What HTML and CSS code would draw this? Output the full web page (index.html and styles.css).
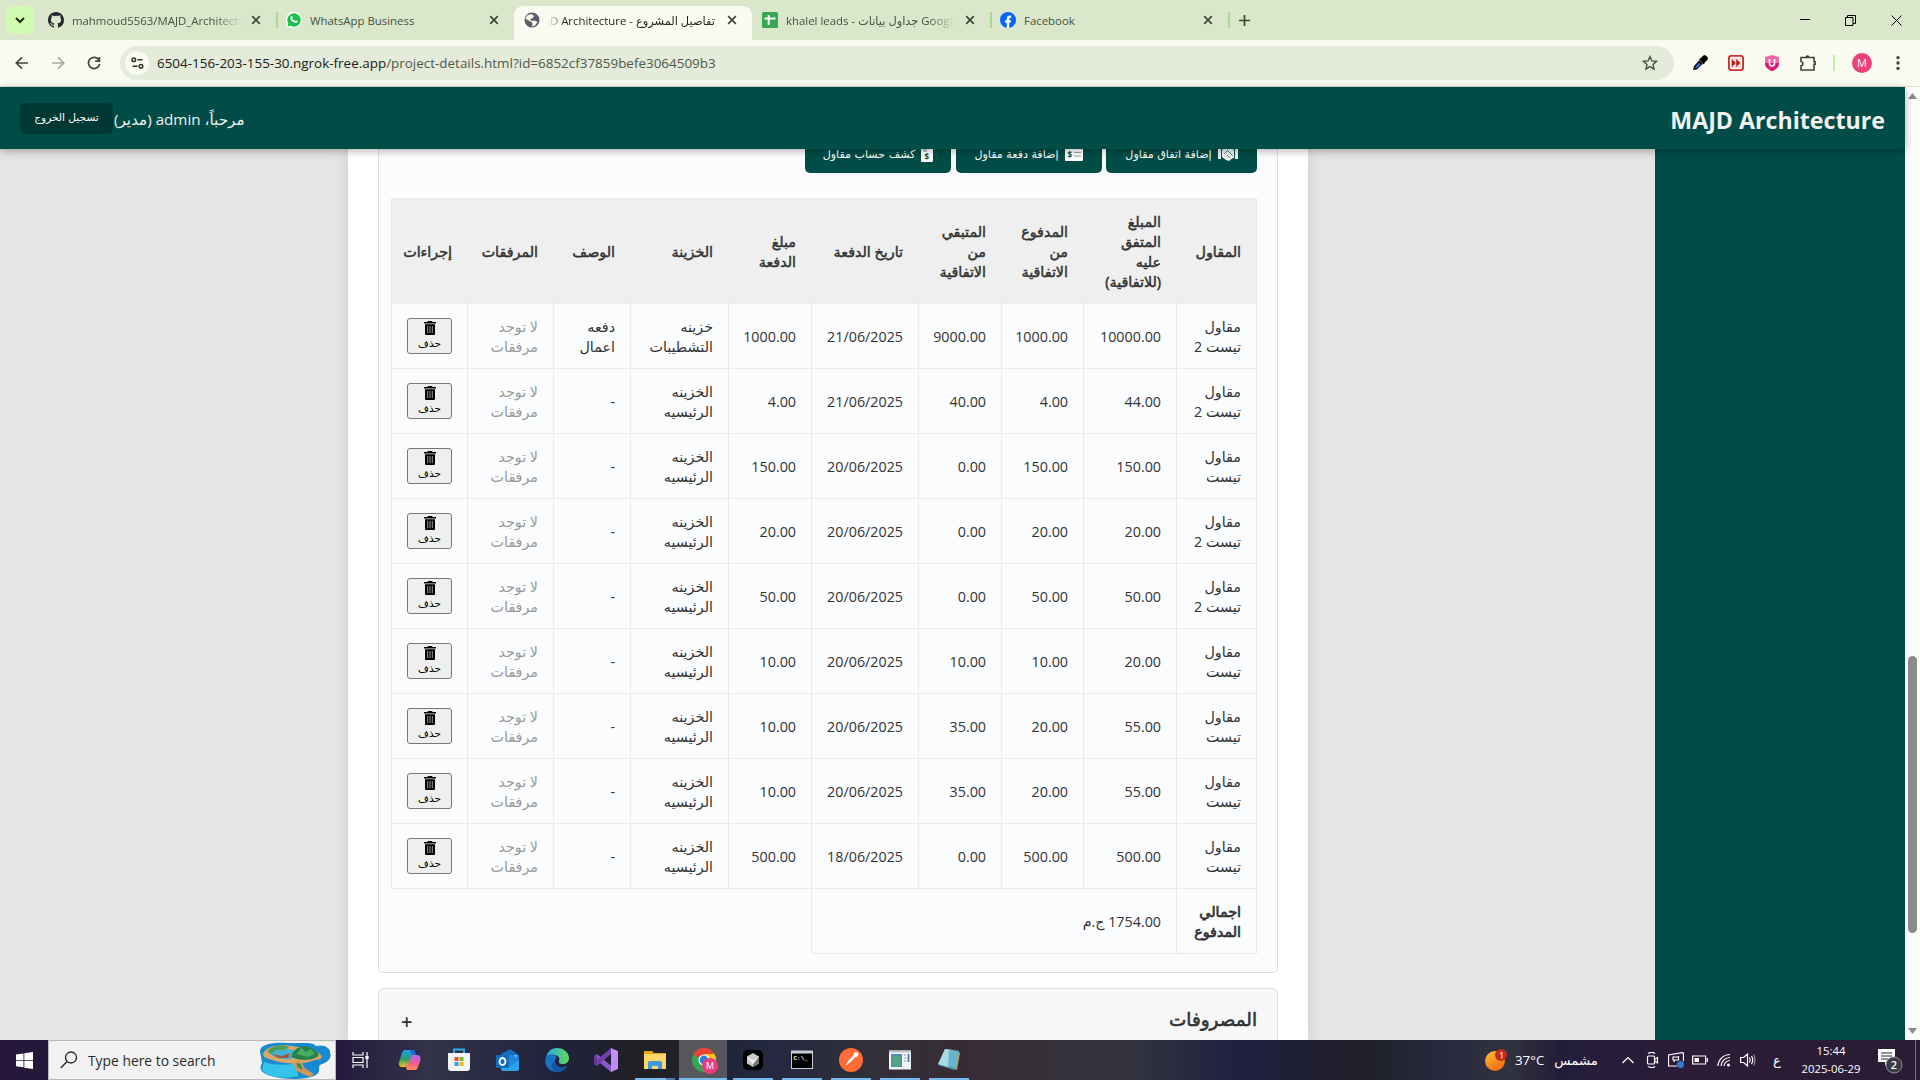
FILE: index.html
```html
<!DOCTYPE html>
<html lang="ar">
<head>
<meta charset="utf-8">
<title>تفاصيل المشروع - MAJD Architecture</title>
<link rel="stylesheet" href="styles.css">
</head>
<body>
<svg width="0" height="0" class="defs">
  <symbol id="x" viewBox="0 0 10 10"><path d="M1.2 1.2l7.6 7.6M8.8 1.2L1.2 8.8" stroke="currentColor" stroke-width="1.7" fill="none"/></symbol>
  <symbol id="trash" viewBox="0 0 12 14"><path d="M4 0h4l.6 1H12v1.500H0V1h3.400zM1 3.300h10V13a1 1 0 0 1-1 1H2a1 1 0 0 1-1-1z" fill="#000"/><path d="M3.700 5v7M6 5v7M8.300 5v7" stroke="#b9bdd0" stroke-width=".8"/></symbol>
</svg>

<div class="tabs">
  <div class="tabsearch"><svg width="10" height="8" viewBox="0 0 10 8"><path d="M1 2l4 4 4-4" fill="none" stroke="#1c2b12" stroke-width="2"/></svg></div>
  <div class="tab">
    <svg class="fav" viewBox="0 0 16 16"><path fill="#24292f" d="M8 0C3.580 0 0 3.580 0 8c0 3.540 2.290 6.530 5.470 7.590.4.070.55-.17.55-.38 0-.19-.01-.82-.01-1.490-2.010.37-2.530-.49-2.690-.94-.09-.23-.48-.94-.82-1.130-.28-.15-.68-.52-.01-.53.63-.01 1.080.58 1.230.82.72 1.210 1.870.87 2.330.66.070-.52.28-.87.51-1.070-1.780-.2-3.640-.89-3.640-3.950 0-.87.31-1.590.82-2.150-.08-.2-.36-1.020.08-2.120 0 0 .67-.21 2.200.82A7.600 7.600 0 0 1 8 3.870c.68 0 1.360.09 2 .26 1.530-1.040 2.200-.82 2.200-.82.44 1.100.16 1.920.08 2.120.51.56.82 1.270.82 2.150 0 3.070-1.870 3.750-3.650 3.950.29.25.54.73.54 1.480 0 1.070-.01 1.930-.01 2.200 0 .21.15.46.55.38A8 8 0 0 0 16 8c0-4.420-3.580-8-8-8z"/></svg>
    <span class="ttl fade">mahmoud5563/MAJD_Architecture</span><svg class="cl"><use href="#x"/></svg>
  </div>
  <div class="tab line">
    <svg class="fav" viewBox="0 0 16 16"><path d="M0 16l1-4.200A8 8 0 1 1 4.500 15z" fill="#fff"/><path d="M1.400 14.600l.9-3.100A6.700 6.700 0 1 1 4.700 13.800z" fill="#18c14b"/><path d="M5.300 4.200c.7-.5 1 0 1.400 1.300.1.500-.5.800-.5 1.100.7 1.300 1.600 2 2.800 2.500.4 0 .7-.9 1.100-.8 1.500.6 1.700.8 1.400 1.600-.8 1.500-2.600 1.200-4.300.2C5.300 8.900 4.300 7.600 4.400 6c0-.8.400-1.400.9-1.800z" fill="#fff"/></svg>
    <span class="ttl">WhatsApp Business</span><svg class="cl"><use href="#x"/></svg>
  </div>
  <div class="tab active">
    <svg class="fav" viewBox="0 0 16 16"><circle cx="8" cy="8" r="7.500" fill="#5a5e68"/><path d="M3 3.500L7.500 2l2.500 2-1.500 2.500L6 7l1.500 2 3-.5 3 1.500-2.500 3.500-3 1 .5-3.500L4 8 1.500 7z" fill="#f9faf0"/></svg>
    <span class="ttl fadel" dir="rtl">تفاصيل المشروع - MAJD Architecture</span><svg class="cl"><use href="#x"/></svg>
  </div>
  <div class="tab">
    <svg class="fav" viewBox="0 0 16 16"><rect width="16" height="16" rx="1.500" fill="#34a853"/><path d="M6.700 3v10M2.500 6.500h11" stroke="#fff" stroke-width="2"/></svg>
    <span class="ttl fade">khalel leads - جداول بيانات Google</span><svg class="cl"><use href="#x"/></svg>
  </div>
  <div class="tab line">
    <svg class="fav" viewBox="0 0 16 16"><circle cx="8" cy="8" r="8" fill="#0866ff"/><path d="M6.800 16v-5.300H5V8.200h1.800V7c0-2.500 1.200-3.500 3.100-3.500.5 0 1 .1 1.300.2v2.200h-.9c-.9 0-1.100.5-1.100 1.200v1.100H11l-.4 2.500H9.200V16z" fill="#fff"/></svg>
    <span class="ttl">Facebook</span><svg class="cl"><use href="#x"/></svg>
  </div>
  <div class="plus"><svg width="11" height="11" viewBox="0 0 11 11"><path d="M5.500 0v11M0 5.500h11" stroke="#3a4a2e" stroke-width="1.700"/></svg></div>
  <div class="win">
    <svg width="10" height="10"><path d="M0 4.500h10" stroke="#000"/></svg>
    <svg width="11" height="11"><path d="M.5 2.500h7.500v8H.5zM2.500 2.500v-2h8v8H8" fill="none" stroke="#000"/></svg>
    <svg width="11" height="11"><path d="M.5.5l10 10M10.500.5l-10 10" stroke="#000"/></svg>
  </div>
</div>

<div class="toolbar">
  <div class="nav">
    <svg width="14" height="14" viewBox="0 0 14 14"><path d="M13 7H1.500M7 1.300L1.300 7 7 12.700" fill="none" stroke="#3d4a35" stroke-width="1.700"/></svg>
    <svg width="14" height="14" viewBox="0 0 14 14"><path d="M1 7h11.500M7 1.300L12.700 7 7 12.700" fill="none" stroke="#a6ab9d" stroke-width="1.700"/></svg>
    <svg width="14" height="14" viewBox="0 0 14 14"><path d="M12 4.200A5.600 5.600 0 1 0 12.600 8M12.400 1v4.200H8.200" fill="none" stroke="#3d4a35" stroke-width="1.700"/></svg>
  </div>
  <div class="url">
    <div class="site"><svg width="13" height="12" viewBox="0 0 13 12"><g fill="none" stroke="#2d3926" stroke-width="1.500"><circle cx="2.800" cy="2.800" r="1.800"/><path d="M6.500 2.800h5M1.500 9.200h5"/><circle cx="10" cy="9.200" r="1.800"/></g></svg></div>
    <span class="addr"><b>6504-156-203-155-30.ngrok-free.app</b>/project-details.html?id=6852cf37859befe3064509b3</span>
    <svg width="16" height="16" viewBox="0 0 16 16"><path d="M8 1.500l1.900 4.400 4.700.4-3.600 3.100 1.100 4.700L8 11.600l-4.100 2.500L5 9.400 1.400 6.300l4.700-.4z" fill="none" stroke="#444b3e" stroke-width="1.300"/></svg>
  </div>
  <div class="exts">
    <svg viewBox="0 0 16 16"><path d="M1 15l1-4 5.500-6 3.500 3.500L5 14.500z" fill="#10131c"/><path d="M3 12.500l4-4.500 1.500 1.500L5 13z" fill="#4b72e6"/><path d="M7 4l2-1 2-2.300L13 0l3 2.500-.5 2.500L13 7l-1 2.500z" fill="#000"/></svg>
    <svg viewBox="0 0 16 16"><rect x=".9" y=".9" width="14.200" height="14.200" rx="2.500" fill="#fff" stroke="#c7312d" stroke-width="1.900"/><rect x="2.800" y="2.800" width="10.400" height="10.400" fill="#f6dcda"/><path d="M3.800 4l4 4-4 4zM8.200 4l4.200 4-4.200 4z" fill="#b5201c"/></svg>
    <svg viewBox="0 0 16 16"><path d="M8 0l7 2v6c0 4-3 6.500-7 8-4-1.500-7-4-7-8V2z" fill="#ee6aa5"/><path d="M1 8h14c0 4-3 6.500-7 8-4-1.500-7-4-7-8z" fill="#d91d72"/><path d="M5.500 4v4.500a2.500 2.500 0 0 0 5 0V4" fill="none" stroke="#fff" stroke-width="1.700"/></svg>
    <svg viewBox="0 0 16 16"><path d="M1 2.500h13v4.200h1.300v2.600H14V15H1v-4c2.600-.5 2.600-4 0-4.500z" fill="none" stroke="#3d4a35" stroke-width="1.600"/><path d="M5.500 2a2 1.800 0 0 1 4 0z" fill="#3d4a35"/></svg>
    <i></i>
    <span class="me">M</span>
    <svg viewBox="0 0 16 16" fill="#3d4a35"><circle cx="8" cy="2.600" r="1.700"/><circle cx="8" cy="8" r="1.700"/><circle cx="8" cy="13.400" r="1.700"/></svg>
  </div>
</div>

<div class="view">
<div class="page" dir="rtl">
  <header>
    <h1 dir="ltr">MAJD Architecture</h1>
    <div class="user"><span>مرحباً، admin (مدير)</span><button class="logout">تسجيل الخروج</button></div>
  </header>
  <div class="body">
    <aside></aside>
    <main>
      <section class="sec">
        <div class="btns">
          <button class="b1"><svg width="20" height="14" viewBox="0 0 20 14"><path d="M0 2h3v10H0zM17 2h3v10h-3zM4 2.500l3-1 3 .8 3-.8 3 1V11l-2 .6-3 2.400-3-1-4-3z" fill="#eef4f3"/><path d="M6 7l3.500-3.500 5 5M9 8l3 3" stroke="#4d827e" fill="none"/></svg><span>إضافة اتفاق مقاول</span></button>
          <button class="b2"><svg width="18" height="13" viewBox="0 0 18 13"><rect width="18" height="13" rx="1" fill="#fff"/><path d="M9 4.500h7M9 8h7" stroke="#8fb0ad"/><text x="2.500" y="10" class="dol">$</text></svg><span>إضافة دفعة مقاول</span></button>
          <button class="b3"><svg width="12" height="15" viewBox="0 0 12 15"><path d="M1 0h10a1 1 0 0 1 1 1v13a1 1 0 0 1-1 1H1a1 1 0 0 1-1-1V1a1 1 0 0 1 1-1z" fill="#fff"/><path d="M2 2h4M2 4h4" stroke="#6d9693"/><text x="3.500" y="12.500" class="dol">$</text></svg><span>كشف حساب مقاول</span></button>
        </div>
        <table>
          <colgroup><col class="c1"><col class="c2"><col class="c3"><col class="c4"><col class="c5"><col class="c6"><col class="c7"><col class="c8"><col class="c9"><col class="c10"></colgroup>
          <thead><tr><th>المقاول</th><th>المبلغ<br>المتفق<br>عليه<br>(للاتفاقية)</th><th>المدفوع<br>من<br>الاتفاقية</th><th>المتبقي<br>من<br>الاتفاقية</th><th>تاريخ الدفعة</th><th>مبلغ<br>الدفعة</th><th>الخزينة</th><th>الوصف</th><th>المرفقات</th><th>إجراءات</th></tr></thead>
          <tbody>
          <tr><td>مقاول<br>تيست 2</td><td>10000.00</td><td>1000.00</td><td>9000.00</td><td>21/06/2025</td><td>1000.00</td><td>خزينه<br>التشطيبات</td><td>دفعه<br>اعمال</td><td class="no">لا توجد<br>مرفقات</td><td><button class="del"><svg><use href="#trash"/></svg>حذف</button></td></tr>
          <tr><td>مقاول<br>تيست 2</td><td>44.00</td><td>4.00</td><td>40.00</td><td>21/06/2025</td><td>4.00</td><td>الخزينه<br>الرئيسيه</td><td>-</td><td class="no">لا توجد<br>مرفقات</td><td><button class="del"><svg><use href="#trash"/></svg>حذف</button></td></tr>
          <tr><td>مقاول<br>تيست</td><td>150.00</td><td>150.00</td><td>0.00</td><td>20/06/2025</td><td>150.00</td><td>الخزينه<br>الرئيسيه</td><td>-</td><td class="no">لا توجد<br>مرفقات</td><td><button class="del"><svg><use href="#trash"/></svg>حذف</button></td></tr>
          <tr><td>مقاول<br>تيست 2</td><td>20.00</td><td>20.00</td><td>0.00</td><td>20/06/2025</td><td>20.00</td><td>الخزينه<br>الرئيسيه</td><td>-</td><td class="no">لا توجد<br>مرفقات</td><td><button class="del"><svg><use href="#trash"/></svg>حذف</button></td></tr>
          <tr><td>مقاول<br>تيست 2</td><td>50.00</td><td>50.00</td><td>0.00</td><td>20/06/2025</td><td>50.00</td><td>الخزينه<br>الرئيسيه</td><td>-</td><td class="no">لا توجد<br>مرفقات</td><td><button class="del"><svg><use href="#trash"/></svg>حذف</button></td></tr>
          <tr><td>مقاول<br>تيست</td><td>20.00</td><td>10.00</td><td>10.00</td><td>20/06/2025</td><td>10.00</td><td>الخزينه<br>الرئيسيه</td><td>-</td><td class="no">لا توجد<br>مرفقات</td><td><button class="del"><svg><use href="#trash"/></svg>حذف</button></td></tr>
          <tr><td>مقاول<br>تيست</td><td>55.00</td><td>20.00</td><td>35.00</td><td>20/06/2025</td><td>10.00</td><td>الخزينه<br>الرئيسيه</td><td>-</td><td class="no">لا توجد<br>مرفقات</td><td><button class="del"><svg><use href="#trash"/></svg>حذف</button></td></tr>
          <tr><td>مقاول<br>تيست</td><td>55.00</td><td>20.00</td><td>35.00</td><td>20/06/2025</td><td>10.00</td><td>الخزينه<br>الرئيسيه</td><td>-</td><td class="no">لا توجد<br>مرفقات</td><td><button class="del"><svg><use href="#trash"/></svg>حذف</button></td></tr>
          <tr><td>مقاول<br>تيست</td><td>500.00</td><td>500.00</td><td>0.00</td><td>18/06/2025</td><td>500.00</td><td>الخزينه<br>الرئيسيه</td><td>-</td><td class="no">لا توجد<br>مرفقات</td><td><button class="del"><svg><use href="#trash"/></svg>حذف</button></td></tr>
          </tbody>
          <tfoot><tr><td class="sum">اجمالي<br>المدفوع</td><td colspan="4">1754.00 ج.م</td></tr></tfoot>
        </table>
      </section>
      <section class="next"><h2>المصروفات</h2><b>+</b></section>
    </main>
  </div>
</div>
<div class="scroll"><svg width="9" height="6"><path d="M4.500 0L9 6H0z" fill="#8b8b8b"/></svg><i></i><svg width="9" height="6"><path d="M0 0h9L4.500 6z" fill="#8b8b8b"/></svg></div>
</div>

<div class="task">
  <div class="start"><svg width="17" height="17" viewBox="0 0 17 17"><path d="M0 2.400l7.500-1V8H0zM8.300 1.300L17 0v8H8.300zM0 8.800h7.500v6.500l-7.500-1zM8.300 8.800H17V17l-8.700-1.300z" fill="#fff"/></svg></div>
  <div class="search">
    <svg width="18" height="18" viewBox="0 0 18 18"><circle cx="11" cy="6.500" r="5.500" fill="none" stroke="#222" stroke-width="1.300"/><path d="M7 10.500L.8 17" stroke="#222" stroke-width="1.300"/></svg>
    <span>Type here to search</span>
    <svg class="isle" width="71" height="37" viewBox="0 0 70 37" preserveAspectRatio="none"><path d="M0 9C0 2 14 0 27 1l18 0c6 0 9 1 10 3 8-2 15 2 14 7 2 4-1 9-10 12-2 3 2 8-6 11-8 4-30 4-42 0C0 31-1 26 2 21z" fill="#188ad0"/><path d="M4 20c10 4 28 3 30 1l4 13c-12 3-33 2-36-7z" fill="#35c3ea"/><path d="M3 12C5 3 24 2 31 4s18 0 28 8c4 3 1 6-5 6-10 5-30 5-45-1-4-1-6-3-6-5z" fill="#dba765"/><path d="M8 10c6-4 18-4 24-2 5 0 7 5 1 8-9 3-20 0-25-6z" fill="#3fb4d6"/><path d="M7 9c4-4 9-5 14-6l8 2-5 3-8 0-5 4z" fill="#4a9e55"/><path d="M31 15c0-5 5-10 13-11 7 1 12 5 14 9-2 5-18 7-27 2z" fill="#27834a"/><path d="M36 12l5-6 4 4 5-3 4 5-7 3z" fill="#49ad61"/><path d="M12 12l10 2 7-3-1 5-10 0z" fill="#a5553b"/><path d="M33 20l7-1 4 7 9 6-3 3-8-3-7-4-1-4z" fill="#cf975a"/><path d="M36 21l4 1 2 6-5-3z" fill="#348b54"/></svg>
  </div>
  <div class="tv"><svg width="18" height="16" viewBox="0 0 18 16"><path d="M1 0v3h10V0M1 16v-3h10v3M1 5.500h10v5H1zM15 0v16" fill="none" stroke="#fff" stroke-width="1.200"/><rect x="13.400" y="4" width="3.200" height="3" fill="#fff"/></svg></div>
  <div class="apps">
    <div><svg viewBox="0 0 24 24"><defs><linearGradient id="g1" x1="0" y1="0" x2="0" y2="1"><stop offset="0" stop-color="#1d9bf0"/><stop offset=".55" stop-color="#2f9e6e"/><stop offset="1" stop-color="#f5c518"/></linearGradient><linearGradient id="g2" x1="0" y1="0" x2="0" y2="1"><stop offset="0" stop-color="#a56bf0"/><stop offset=".5" stop-color="#f0569b"/><stop offset="1" stop-color="#ff9050"/></linearGradient></defs><path d="M7 2h9l2 5h-4L10 19H3c-3-1-2-5-1-8L4 5c.6-2 1.500-3 3-3z" fill="url(#g1)"/><path d="M12 2h4l2 5-4 0z" fill="#2464cf"/><path d="M17 22H9l-2-5h3L14 7h6c3 1 3 4 2 7l-2 5c-.6 2-1.500 3-3 3z" fill="url(#g2)"/></svg></div>
    <div><svg viewBox="0 0 24 24"><path d="M7 5V1.500h10V5" fill="none" stroke="#30aee8" stroke-width="2"/><path d="M1 5h22v15a3 3 0 0 1-3 3H4a3 3 0 0 1-3-3z" fill="#f2f3f5"/><path d="M7.500 9h4v4h-4z" fill="#e8502e"/><path d="M12.500 9h4v4h-4z" fill="#7cb82f"/><path d="M7.500 14h4v4h-4z" fill="#2ba5e6"/><path d="M12.500 14h4v4h-4z" fill="#fbb713"/></svg></div>
    <div><svg viewBox="0 0 24 24"><path d="M5 6l9-5 9 6v14H5z" fill="#1b6dc0"/><path d="M8 7h13v7H8z" fill="#59c9f5"/><path d="M5 14l9 4 9-6v9a2 2 0 0 1-2 2H7a2 2 0 0 1-2-2z" fill="#2aa5e9"/><path d="M10 7h8l5 5-9 6z" fill="#2189dc"/><rect y="7" width="13" height="13" rx="1" fill="#106cbd"/><ellipse cx="6.500" cy="13.500" rx="3" ry="3.500" fill="none" stroke="#fff" stroke-width="1.800"/></svg></div>
    <div><svg viewBox="0 0 24 24"><defs><linearGradient id="g3"><stop offset="0" stop-color="#26a8e8"/><stop offset="1" stop-color="#63d957"/></linearGradient></defs><path d="M1 10C2 4 6 0 12 0c7 0 12 5 12 10 0 4-3 6-6 6s-5-1-4-3 0-6-5-6c-4 0-7 2-8 5z" fill="url(#g3)"/><path d="M1 9c-3 9 4 15 11 15 4 0 8-2 10-6-5 3-12 1-12-5 0-2 1-3 2-4C8 5 3 6 1 9z" fill="#1672c7"/><path d="M10 13c-1 7 6 8 12 5-3 5-8 6-11 6-5-2-6-9-1-11z" fill="#1853a1"/></svg></div>
    <div><svg viewBox="0 0 24 24"><path d="M0 8l3-2L20 20l-3 4L0 10z" fill="#8a58c9"/><path d="M0 16l3 2L18 5l-1-5L0 14z" fill="#7240a8"/><path d="M0 8l3-2v12l-3-2z" fill="#68379c"/><path d="M17 0l7 3v18l-7 3z" fill="#c48cf5"/></svg></div>
    <div class="run half"><svg viewBox="0 0 24 24"><path d="M1 3h8l2 2h12v5H1z" fill="#e8a317"/><path d="M1 6h22v15H1z" fill="#ffd766"/><path d="M5 21v-6c0-1.500 1-2 2-2h10c1 0 2 .5 2 2v6h-4v-3H9v3z" fill="#3d98dd"/></svg></div>
    <div class="run on"><svg viewBox="0 0 24 24"><circle cx="12" cy="12" r="12" fill="#33a852"/><path d="M12 12L1.600 6A12 12 0 0 1 22.400 6z" fill="#ea4335"/><path d="M12 6h10.400A12 12 0 0 1 12 24l5-9z" fill="#fbc116"/><path d="M1.600 6A12 12 0 0 1 22.400 6H12L7 10z" fill="#ea4335"/><circle cx="12" cy="12" r="5.600" fill="#fff"/><circle cx="12" cy="12" r="4.400" fill="#2c7be5"/></svg><em>M</em></div>
    <div class="run"><svg viewBox="0 0 24 24"><rect x="2" y="2" width="20" height="20" rx="5" fill="#000"/><path d="M12 5l6 3.500v7L12 19l-6-3.500v-7z" fill="#c9c9c9"/><path d="M12 12l6-3.500v7L12 19z" fill="#777"/><path d="M6 8.500L12 12l6-3.500-6 8z" fill="#eee"/></svg></div>
    <div class="run"><svg viewBox="0 0 24 24"><rect x="1" y="2.500" width="22" height="18.500" fill="#c9ccd0"/><rect x="2" y="5.500" width="20" height="14.500" fill="#000"/><text x="3.500" y="12" class="cmd">C:\_</text></svg></div>
    <div class="run"><svg viewBox="0 0 24 24"><circle cx="12" cy="12" r="12" fill="#ff6c37"/><path d="M6.500 17.500l3-5 6-6 1.500 2-6 6z" fill="#fff"/><circle cx="17" cy="6.500" r="2.400" fill="#fff"/></svg></div>
    <div class="run"><svg viewBox="0 0 24 24"><rect x="1" y="2.500" width="22" height="19" fill="#f3f6f8"/><rect x="3" y="6" width="11" height="13" fill="#4a8fb5"/><rect x="4.500" y="8" width="8" height="10" fill="#55a581"/><path d="M16 7h2M16 10h2M16 13h2" stroke="#8a9aa5" stroke-width="1.200"/><path d="M20.500 6v8" stroke="#3f74c9" stroke-width="1.800"/><path d="M1 3.500h22" stroke="#b8c4ce" stroke-width="2"/></svg></div>
    <div class="run"><svg viewBox="0 0 24 24"><path d="M21 3l2 2-3 17-3-1z" fill="#b59a62"/><path d="M8 1l14 2-4 19-17-5z" fill="#4f9fb5"/><path d="M8 1l8 1-4 17-11-3z" fill="#a8dbe6"/><path d="M12 2l10 1-3 17-8-2z" fill="#65b4c8"/></svg></div>
  </div>
  <div class="tray">
    <div class="wx"><svg width="24" height="24" viewBox="0 0 24 24"><defs><linearGradient id="g4" x1="0" y1="0" x2=".6" y2="1"><stop offset="0" stop-color="#fbbf34"/><stop offset="1" stop-color="#f26c13"/></linearGradient></defs><circle cx="11" cy="13" r="10" fill="url(#g4)"/><circle cx="17" cy="7" r="6" fill="#c42b1c"/><text x="15" y="10.500" class="one">1</text></svg><span>37°C</span><span class="sun">مشمس</span></div>
    <div class="icons">
      <svg viewBox="0 0 16 16"><path d="M2.500 11L8 5.500l5.500 5.500"/></svg>
      <svg viewBox="0 0 16 16"><rect x="3.500" y="4" width="7" height="8" rx="1"/><path d="M10.500 7.500l3-2v5.500l-3-2M4 1.500q4-2 7 0M4 14.500q4 2 7 0"/></svg>
      <svg viewBox="0 0 16 16"><path d="M12 1H15.500V9M9 14H.5V3L15 .5M5 8V5h6M10.500 4v4h-5l1 2"/><circle cx="12.500" cy="12.500" r="3.500" fill="#2d7bd0" stroke="none"/></svg>
      <svg viewBox="0 0 16 16"><path d="M.6 4h13v8H.6zM15.300 6v4"/><path d="M2.500 6h4.500v4H2.500z" fill="#fff" stroke="none"/></svg>
      <svg viewBox="0 0 16 16"><path d="M2 14A12 12 0 0 1 14 2.500M5 14a9 9 0 0 1 9-8.500M8 14a6 6 0 0 1 6-5.500"/><circle cx="12.500" cy="13" r="1.500" fill="#fff" stroke="none"/></svg>
      <svg viewBox="0 0 16 16"><path d="M.6 5.500h3L7.500 2v12l-3.900-3.500h-3zM9.500 5.500q1.500 2.500 0 5M11.500 4q2.500 4 0 8"/><path d="M13.500 2.500q3 5.500 0 11" opacity=".5"/></svg>
    </div>
    <span class="lang">ع</span>
    <div class="clock"><span>15:44</span><span>2025-06-29</span></div>
    <div class="note"><svg width="25" height="25" viewBox="0 0 25 25"><path d="M0 0h17v13h-6l-4 4v-4H0z" fill="#fff"/><path d="M3 4h11M3 7h11M3 10h7" stroke="#2b2038"/><circle cx="16" cy="16" r="8" fill="#3b3a46" stroke="#8d8b98"/><text x="12.800" y="20" class="two">2</text></svg></div>
    <i></i>
  </div>
</div>
</body>
</html>
```
FILE: styles.css
```css
*{box-sizing:border-box}
body{margin:0;width:1920px;height:1080px;overflow:hidden;display:flex;flex-direction:column;font-family:"Open Sans","Noto Sans","DejaVu Sans",sans-serif;color:#333}
.defs{position:absolute}
svg{flex:none;display:block}
/* browser tabs */
.tabs{height:40px;background:#dae7cb;display:flex;flex:none;padding:6px 0 0 6px}
.tabsearch{width:28px;height:28px;border-radius:9px;background:#cffcb0;display:flex;align-items:center;justify-content:center;margin-right:4px}
.tab{width:238px;height:34px;padding:0 15px 6px 10px;display:flex;align-items:center;gap:8px;font-size:11.400px;color:#46523d}
.fav{width:16px;height:16px}
.cl{width:10px;height:10px;margin-left:auto;color:#3c4935}
.ttl{width:169px;white-space:nowrap;overflow:hidden}
.fade{-webkit-mask:linear-gradient(90deg,#000 85%,transparent);mask:linear-gradient(90deg,#000 85%,transparent)}
.fadel{width:167px;-webkit-mask:linear-gradient(270deg,#000 90%,transparent);mask:linear-gradient(270deg,#000 90%,transparent)}
.tab.active{background:#f9faf0;border-radius:9px 9px 0 0;color:#1d241a}
.line{background:linear-gradient(#a9d98c,#a9d98c) 0 6px/2px 16px no-repeat}
.plus{width:32px;height:28px;display:flex;align-items:center;justify-content:center;background:linear-gradient(#a9d98c,#a9d98c) 0 6px/2px 16px no-repeat}
.win{margin-left:auto;display:flex;gap:35px;height:28px;align-items:center;padding-right:18px}
.toolbar{height:47px;flex:none;background:#f9faf0;border-bottom:1px solid #dfe1d6;display:flex;align-items:center}
.nav{width:120px;display:flex;gap:22px;padding-left:15px}
.url{width:1554px;height:34px;border-radius:17px;background:#e4ebda;display:flex;align-items:center;padding:0 16px 0 5px}
.site{width:24px;height:24px;border-radius:50%;background:#f9faf0;display:flex;align-items:center;justify-content:center;margin-right:8px}
.addr{flex:1;font-size:13.440px;color:#50584a;white-space:nowrap}
.addr b{font-weight:400;color:#1b2117}
.exts{display:flex;align-items:center;padding-left:18px;gap:20px}
.exts svg{width:16px;height:16px}
.exts i{width:2px;height:16px;background:#c2eba8;margin:0 -3px 0 -3px}
.me{width:20px;height:20px;border-radius:50%;background:#ec407a;color:#fff;font-size:11px;line-height:20px;text-align:center}
.me+svg{margin-left:-2px}
/* application */
.view{height:953px;flex:none;display:flex}
.page{width:1905px;display:flex;flex-direction:column;background:#e5e5e5}
header{height:62px;flex:none;background:#004d47;box-shadow:0 2px 8px rgba(0,0,0,.3);position:relative;z-index:2;display:flex;justify-content:space-between;align-items:center;padding:0 20px;color:#f1f1f1}
h1{margin:4px 0 0;font-size:23.200px;line-height:30px;font-weight:700;white-space:nowrap}
.user{display:flex;align-items:center;font-size:15.200px;white-space:nowrap}
.user span{margin-top:2px}
.logout{width:93px;height:31px;border:0;border-radius:5px;background:#003833;color:#fff;font:10.600px "DejaVu Sans",sans-serif;padding:0 0 2px;margin-right:1px}
.body{height:891px;display:flex;overflow:hidden}
aside{width:250px;background:#004d47}
main{width:960px;margin:0 347px 0 348px;background:#fff;box-shadow:0 0 15px rgba(0,0,0,.12);padding:0 30px}
.sec{height:824px;border:1px solid #ddd;border-top:0;border-radius:0 0 5px 5px;background:#fafcfe;padding:0 20px 0 12px}
.btns{height:24px;display:flex;align-items:flex-end;gap:4.500px;margin-bottom:25px}
.btns button{height:36px;flex:none;border:0;border-radius:5px;background:#004d47;color:#fff;font:11.100px "DejaVu Sans",sans-serif;padding:0 0 2px;display:flex;align-items:center;justify-content:center;gap:6px;white-space:nowrap}
.b1{width:151px}.b2{width:146px}.b3{width:146px}
.dol{font:bold 8px "Open Sans",sans-serif;fill:#004d47;direction:ltr}
table{table-layout:fixed;width:866px;border-collapse:collapse;font-size:14.300px;line-height:20px}
.c1{width:80px}.c2{width:93px}.c3{width:82px}.c4{width:83px}.c5{width:107px}.c6{width:83px}.c7{width:98px}.c8{width:77px}.c9{width:86px}.c10{width:76px}
th,td{border:1px solid #e9ebed;padding:2px 15px 0;text-align:right;vertical-align:middle;white-space:nowrap}
th{background:#efefef;height:105px;font-weight:400;-webkit-text-stroke:.5px #333}
td{height:65px}
tbody td:last-child{padding:0}
.no{color:#999}
.sum{-webkit-text-stroke:.7px #333}
.del{display:flex;flex-direction:column;align-items:center;width:45px;height:36px;margin:0 15px 0 0;padding:2px 0 0;border:1px solid #767676;border-radius:3px;background:#efefef;color:#000;font:10.500px/16px "DejaVu Sans",sans-serif}
.del svg{width:12px;height:14px}
.next{margin-top:15px;height:80px;border:1px solid #ddd;border-radius:5px;background:#f7f7f7;display:flex;justify-content:space-between;padding:15px 20px 0 21px;font-size:20px}
h2{margin:0;font-size:18.400px;line-height:30px;font-weight:400;-webkit-text-stroke:.6px #333}
.next b{font-weight:600;line-height:36px;padding-left:1px}
.scroll{width:15px;background:#fcfcfc;display:flex;flex-direction:column;align-items:center;padding:6px 0 6px}
.scroll i{width:9px;height:277px;border-radius:5px;background:#8b8b8b;margin:557px 0 auto}
/* taskbar */
.task{height:40px;flex:none;display:flex;background:linear-gradient(90deg,#25183a 0,#241a3c 336px,#33334a 430px,#20223a 560px,#202024 650px,#232740 760px,#30303a 860px,#382c34 960px,#33343e 1130px,#1f2040 1240px,#1f1f28 1360px,#262a3e 1440px,#30323e 1510px,#231d3c 1560px,#2c1c36 1700px,#2a1c34 1920px);color:#fff}
.start{width:48px;display:flex;align-items:center;justify-content:center}
.search{width:288px;background:#f2f2f2;border:1px solid #b9b9b9;display:flex;align-items:center;padding-left:11px;color:#2b2b2b;font-size:13.850px}
.search span{margin-left:10px;white-space:nowrap}
.isle{margin-left:auto;margin-right:4px}
.tv{width:49px;display:flex;align-items:center;justify-content:center}
.apps{display:flex}
.apps div{width:49px;display:flex;align-items:center;justify-content:center;position:relative}
.apps svg{width:24px;height:24px}
.run{background:linear-gradient(#76b9ed,#76b9ed) 50% 100%/40px 2px no-repeat}
.half{background:linear-gradient(90deg,#76b9ed 31px,#4f7fa6 31px) 50% 100%/40px 2px no-repeat}
.run.on{background:linear-gradient(#76b9ed,#76b9ed) 0 100%/48px 2px no-repeat,linear-gradient(#56565c,#56565c) 0 0/48px 40px no-repeat}
.apps em{position:absolute;left:23px;top:18px;width:16px;height:16px;border-radius:50%;background:#e83e7d;font:9px/16px "Open Sans",sans-serif;text-align:center}
.cmd{font:bold 6px "Liberation Mono",monospace;fill:#fff}
.tray{margin-left:auto;display:flex;align-items:center;white-space:nowrap}
.wx{display:flex;align-items:center;width:136px;font-size:13.300px}
.wx svg{margin-right:7px}
.sun{margin-left:10px}
.one{font:9px "Open Sans",sans-serif;fill:#fff}
.two{font:600 11px "Open Sans",sans-serif;fill:#fff}
.icons{display:flex;gap:8px}
.icons svg{width:16px;height:16px;fill:none;stroke:#fff;stroke-width:1.200}
.lang{width:42px;text-align:center;font-size:13px}
.clock{width:66px;display:flex;flex-direction:column;align-items:center;font-size:11.300px;line-height:18px;padding-bottom:1px}
.note{width:51px;padding:2px 0 0 14px}
.tray i{width:1px;height:40px;background:#77717f;margin-right:4px}
```
